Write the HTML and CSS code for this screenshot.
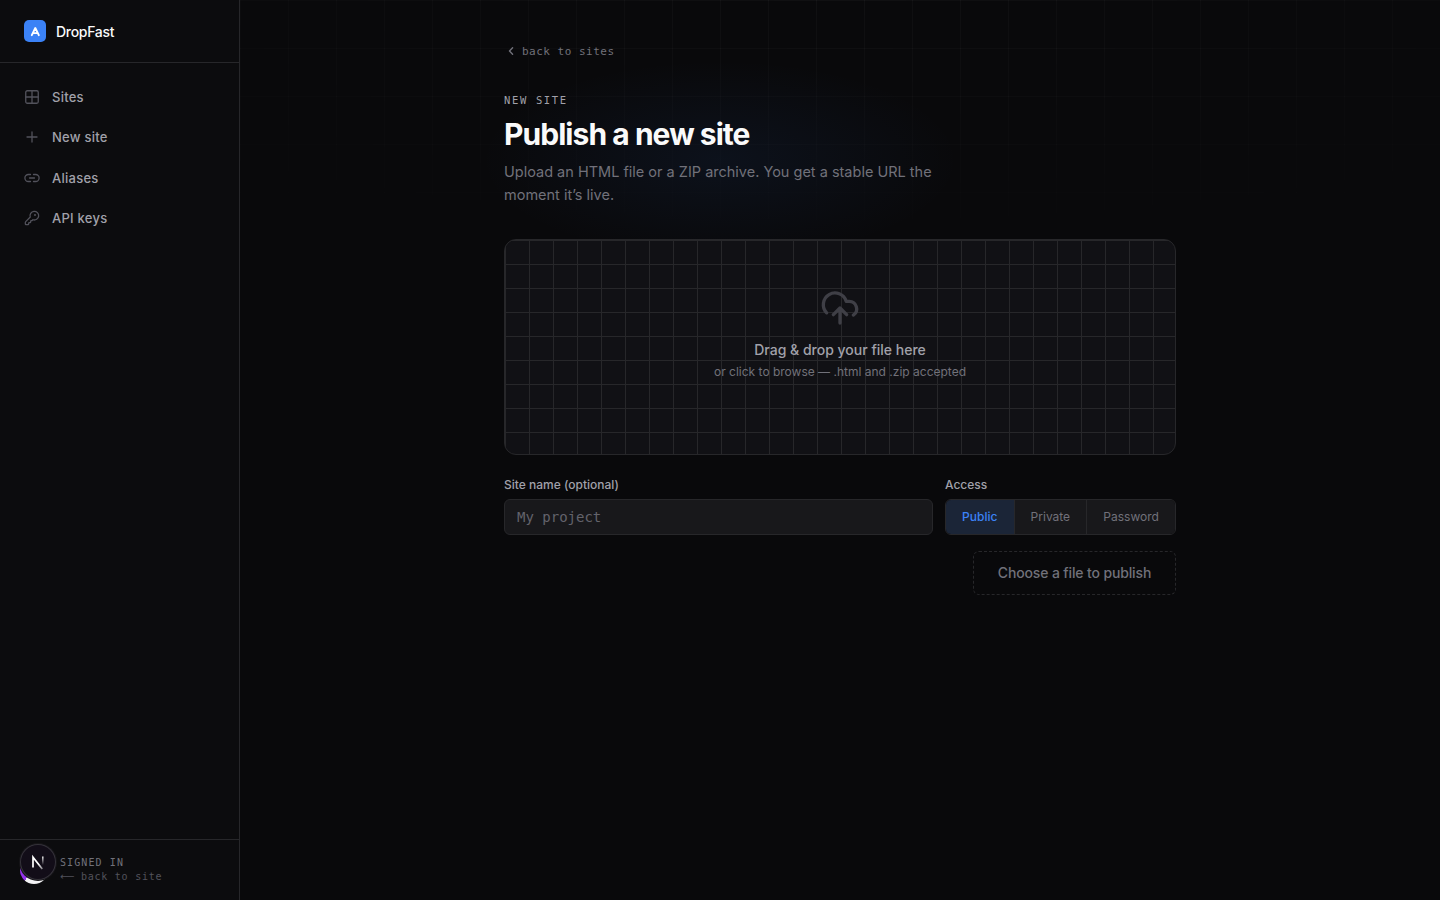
FILE: index.html
```html
<!DOCTYPE html>
<html lang="en">
<head>
    <meta charset="UTF-8">
    <meta name="viewport" content="width=device-width, initial-scale=1.0">
    <title>DropFast</title>
    <link rel="stylesheet" href="styles.css">
</head>
<body>
    <div class="app">
        <aside class="sidebar">
            <div class="brand">
                <svg class="logo" viewBox="0 0 22 22" fill="none">
                    <rect width="22" height="22" rx="5" fill="#3b82f6"/>
                    <path d="M7.8 15.2 11.3 8 14.8 15.2M9.1 13.1H13.5" stroke="#fff" stroke-width="1.9" stroke-linecap="round" stroke-linejoin="round"/>
                </svg>
                <span>DropFast</span>
            </div>
            <nav class="nav">
                <a class="nav_item">
                    <svg viewBox="0 0 16 16"><rect x="1.75" y="1.75" width="12.5" height="12.5" rx="1.5"/><path d="M8 1.75v12.5M1.75 8h12.5"/></svg>
                    Sites
                </a>
                <a class="nav_item">
                    <svg viewBox="0 0 16 16"><path d="M8 3v10M3 8h10"/></svg>
                    New site
                </a>
                <a class="nav_item">
                    <svg viewBox="0 0 16 16"><path d="M6.5 4.5H4.4a3.5 3.5 0 0 0 0 7h2.1M9.5 4.5h2.1a3.5 3.5 0 0 1 0 7H9.5M5.5 8h5"/></svg>
                    Aliases
                </a>
                <a class="nav_item">
                    <svg viewBox="0 0 24 24" class="key"><path d="M2.586 17.414A2 2 0 0 0 2 18.828V21a1 1 0 0 0 1 1h3a1 1 0 0 0 1-1v-1a1 1 0 0 1 1-1h1a1 1 0 0 0 1-1v-1a1 1 0 0 1 1-1h.172a2 2 0 0 0 1.414-.586l.814-.814a6.5 6.5 0 1 0-4-4z"/><circle cx="16.5" cy="7.5" r=".6"/></svg>
                    API keys
                </a>
            </nav>
            <div class="account">
                <div class="avatar"></div>
                <div class="account_text">
                    <div class="signed">SIGNED IN</div>
                    <a class="back_site"><span class="long_arrow">⟵</span>back to site</a>
                </div>
            </div>
        </aside>

        <main class="main">
            <div class="glow"></div>
            <div class="content">
                <a class="back">
                    <svg viewBox="0 0 14 14"><path d="M8.6 3.8 5.5 7l3.1 3.2"/></svg>
                    back to sites
                </a>
                <div class="eyebrow">NEW SITE</div>
                <h1>Publish a new site</h1>
                <p class="lead">Upload an HTML file or a ZIP archive. You get a stable URL the moment it’s live.</p>

                <div class="dropzone">
                    <svg viewBox="0 0 24 24"><path d="M4 14.899A7 7 0 1 1 15.71 8h1.79a4.5 4.5 0 0 1 2.5 8.242M12 12v9M16 16l-4-4-4 4"/></svg>
                    <div class="drop_title">Drag &amp; drop your file here</div>
                    <div class="drop_hint">or click to browse — .html and .zip accepted</div>
                </div>

                <div class="fields">
                    <div class="field name">
                        <label for="site">Site name (optional)</label>
                        <input type="text" id="site" placeholder="My project">
                    </div>
                    <div class="field">
                        <label>Access</label>
                        <div class="segments">
                            <button class="active">Public</button>
                            <button>Private</button>
                            <button>Password</button>
                        </div>
                    </div>
                </div>
                <div class="actions">
                    <button class="publish">Choose a file to publish</button>
                </div>
            </div>
        </main>
    </div>

    <!-- floating dev badge -->
    <div class="dev_badge">
        <svg viewBox="0 0 36 36" fill="none">
            <defs>
                <linearGradient id="diag" x1="20" y1="19" x2="25" y2="25" gradientUnits="userSpaceOnUse"><stop stop-color="#fff"/><stop offset="1" stop-color="#fff" stop-opacity=".3"/></linearGradient>
                <linearGradient id="stem" x1="0" y1="12" x2="0" y2="21" gradientUnits="userSpaceOnUse"><stop stop-color="#fff"/><stop offset="1" stop-color="#fff" stop-opacity="0"/></linearGradient>
            </defs>
            <path d="M13 23.5V13.2L22.3 25" stroke="url(#diag)" stroke-width="1.7"/>
            <path d="M22.8 12.4v9" stroke="url(#stem)" stroke-width="1.5"/>
        </svg>
    </div>
</body>
</html>
```
FILE: styles.css
```css
*
{
    box-sizing: border-box;
}
body
{
    margin: 0;
    background-color: #09090b;
    color: #fafafa;
    font-family: Inter, "Liberation Sans", sans-serif;
    -webkit-font-smoothing: antialiased;
}
button, input
{
    font-family: inherit;
    margin: 0;
}
.app
{
    display: flex;
    height: 100vh;
    overflow: hidden;
}
.sidebar
{
    width: 240px;
    flex: none;
    display: flex;
    flex-direction: column;
    background-color: #0c0c0e;
    border-right: 1px solid #27272a;
}
.brand
{
    height: 63px;
    padding: 0 24px;
    display: flex;
    align-items: center;
    gap: 10px;
    border-bottom: 1px solid #27272a;
    font-size: 14px;
    font-weight: 500;
    letter-spacing: -0.3px;
}
.logo
{
    width: 22px;
    height: 22px;
}
.nav
{
    flex: 1;
    padding: 16px 12px;
    display: flex;
    flex-direction: column;
    gap: 4px;
}
.nav_item
{
    height: 36.25px;
    padding: 0 12px;
    display: flex;
    align-items: center;
    gap: 12px;
    font-size: 13px;
    font-weight: 500;
    letter-spacing: 0.25px;
    color: #a1a1aa;
}
.nav_item svg
{
    width: 16px;
    height: 16px;
    fill: none;
    stroke: #52525b;
    stroke-width: 1.3;
    stroke-linecap: round;
    stroke-linejoin: round;
}
.nav_item .key
{
    stroke-width: 1.9;
}
.account
{
    height: 61px;
    padding: 0 20px;
    display: flex;
    align-items: center;
    gap: 12px;
    border-top: 1px solid #27272a;
}
.avatar
{
    width: 28px;
    height: 28px;
    border-radius: 50%;
    background: linear-gradient(118deg, #9333ea 42%, #f4f4f5 43%);
}
.account_text
{
    font-family: "DejaVu Sans Mono", monospace;
    font-size: 10px;
    line-height: 14px;
}
.signed
{
    letter-spacing: 1.1px;
    color: #71717a;
}
.back_site
{
    display: flex;
    letter-spacing: 0.75px;
    color: #52525b;
}
.long_arrow
{
    width: 21px;
    font-family: "DejaVu Sans", sans-serif;
}
.main
{
    flex: 1;
    position: relative;
}
/* faded 48px grid behind the header */
.main::before
{
    content: "";
    position: absolute;
    inset: 0;
    background-image: linear-gradient(to right, rgba(255, 255, 255, 0.03) 1px, transparent 1px), linear-gradient(to bottom, rgba(255, 255, 255, 0.03) 1px, transparent 1px);
    background-size: 48px 48px;
    -webkit-mask-image: radial-gradient(ellipse 1080px 270px at 50% 0, #000, transparent);
    mask-image: radial-gradient(ellipse 1080px 270px at 50% 0, #000, transparent);
}
.glow
{
    position: absolute;
    top: 60px;
    left: 240px;
    width: 480px;
    height: 200px;
    background: radial-gradient(ellipse closest-side, rgba(59, 130, 246, 0.07), transparent);
}
.content
{
    position: relative;
    width: 672px;
    margin: 0 auto;
    padding-top: 40px;
}
.back
{
    display: flex;
    align-items: center;
    gap: 4px;
    height: 22px;
    font-family: "DejaVu Sans Mono", monospace;
    font-size: 11px;
    letter-spacing: 0.5px;
    color: #71717a;
}
.back svg
{
    width: 14px;
    height: 14px;
    fill: none;
    stroke: #71717a;
    stroke-width: 1.4;
    stroke-linecap: round;
    stroke-linejoin: round;
}
.eyebrow
{
    margin-top: 30px;
    font-family: "DejaVu Sans Mono", monospace;
    font-size: 10.5px;
    line-height: 17px;
    letter-spacing: 1.65px;
    color: #a1a1aa;
}
h1
{
    margin: 7px 0 0;
    font-size: 30px;
    line-height: 36px;
    font-weight: 700;
    letter-spacing: -0.95px;
}
.lead
{
    width: 448px;
    margin: 8px 0 0;
    font-size: 14.5px;
    line-height: 23px;
    letter-spacing: 0;
    color: #71717a;
}
.dropzone
{
    height: 216px;
    margin-top: 33px;
    padding-top: 48px;
    display: flex;
    flex-direction: column;
    align-items: center;
    border: 1px solid #27272a;
    border-radius: 12px;
    background-color: #111115;
    background-image: linear-gradient(to right, #27272a 1px, transparent 1px), linear-gradient(to bottom, #27272a 1px, transparent 1px);
    background-size: 24px 24px;
}
.dropzone svg
{
    width: 40px;
    height: 40px;
    fill: none;
    stroke: #3f3f46;
    stroke-width: 2;
    stroke-linecap: round;
    stroke-linejoin: round;
}
.drop_title
{
    margin-top: 11px;
    font-size: 14px;
    line-height: 21px;
    font-weight: 500;
    color: #a1a1aa;
}
.drop_hint
{
    margin-top: 3px;
    font-size: 12px;
    line-height: 18px;
    color: #71717a;
}
.fields
{
    display: flex;
    gap: 12px;
    margin-top: 20px;
}
.field label
{
    display: block;
    height: 24px;
    font-size: 12px;
    line-height: 20px;
    font-weight: 500;
    color: #a1a1aa;
}
.name
{
    flex: 1;
}
.name input
{
    display: block;
    width: 100%;
    height: 36px;
    padding: 0 12px;
    border: 1px solid #27272a;
    border-radius: 6px;
    background-color: #18181b;
    color: #fafafa;
    font-family: "DejaVu Sans Mono", monospace;
    font-size: 14px;
}
.name input::placeholder
{
    color: #63636b;
}
.segments
{
    display: flex;
    width: 231px;
    height: 36px;
    border: 1px solid #27272a;
    border-radius: 6px;
    overflow: hidden;
}
.segments button
{
    flex: auto;
    padding: 0 0 1px;
    border: 0;
    border-left: 1px solid #27272a;
    background-color: #18181b;
    color: #71717a;
    font-size: 12px;
}
.segments .active
{
    border-left: 0;
    background-color: #1b2537;
    color: #3b82f6;
    font-weight: 500;
}
.actions
{
    display: flex;
    justify-content: flex-end;
    margin-top: 16px;
}
.publish
{
    width: 203px;
    height: 44px;
    padding: 0 0 1px;
    border: 1px dashed #27272a;
    border-radius: 6px;
    background-color: transparent;
    color: #71717a;
    font-size: 14px;
    font-weight: 500;
    letter-spacing: -0.14px;
}
.dev_badge
{
    position: fixed;
    left: 20px;
    bottom: 20px;
    width: 36px;
    height: 36px;
    border-radius: 50%;
    background-color: #120d18;
    box-shadow: inset 0 0 0 1px #35333a, 0 0 0 1px #171619;
}
.dev_badge svg
{
    display: block;
}
```
